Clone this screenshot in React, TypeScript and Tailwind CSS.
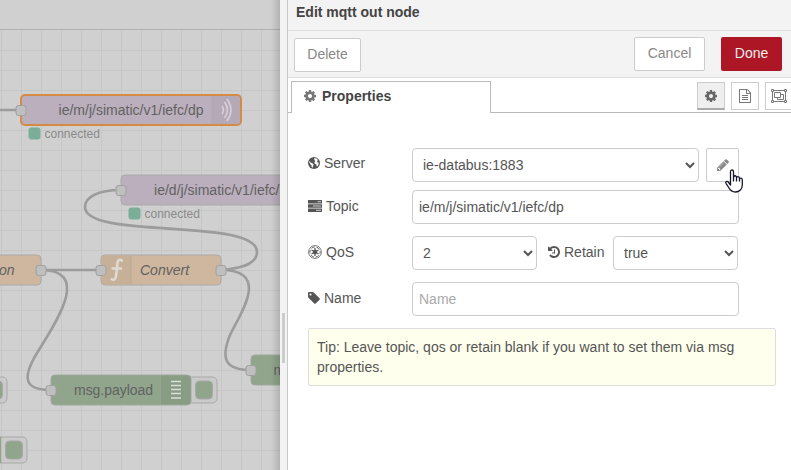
import React from "react";

const paths = {
  cog: "M1152 896q0-106-75-181t-181-75-181 75-75 181 75 181 181 75 181-75 75-181zm512-109v222q0 12-8 23t-20 13l-185 28q-19 54-39 91 35 50 107 138 10 12 10 25t-9 23q-27 37-99 108t-94 71q-12 0-26-9l-138-108q-44 23-91 38-16 136-29 186-7 28-36 28h-222q-14 0-24.5-8.5t-11.5-21.5l-28-184q-49-16-90-37l-141 107q-10 9-25 9-14 0-25-11-126-114-165-168-7-10-7-23 0-12 8-23 15-21 51-66.5t54-70.5q-27-50-41-99l-183-27q-13-2-21-12.5t-8-23.5v-222q0-12 8-23t19-13l186-28q14-46 39-92-40-57-107-138-10-12-10-24 0-10 9-23 26-36 98.5-107.5t94.5-71.5q13 0 26 10l138 107q44-23 91-38 16-136 29-186 7-28 36-28h222q14 0 24.5 8.5t11.5 21.5l28 184q49 16 90 37l142-107q9-9 24-9 13 0 25 10 129 119 165 170 7 8 7 22 0 12-8 23-15 21-51 66.5t-54 70.5q26 50 41 98l183 28q13 2 21 12.5t8 23.5z",
  pencil:
    "M491 1536l91-91-235-235-91 91v107h128v128h107zm523-928q0-22-22-22-10 0-17 7l-542 542q-7 7-7 17 0 22 22 22 10 0 17-7l542-542q7-7 7-17zm-54-192l416 416-832 832h-416v-416zm683 96q0 53-37 90l-166 166-416-416 166-165q36-38 90-38 53 0 91 38l235 234q37 39 37 91z",
  tag: "M576 448q0-53-37.5-90.5t-90.5-37.5-90.5 37.5-37.5 90.5 37.5 90.5 90.5 37.5 90.5-37.5 37.5-90.5zm1067 576q0 53-37 90l-491 492q-39 37-91 37-53 0-90-37l-715-716q-38-37-64.5-101t-26.5-117v-416q0-52 38-90t90-38h416q53 0 117 26.5t102 64.5l715 714q37 39 37 91z",
  history:
    "M1664 896q0 156-61 298t-164 245-245 164-298 61q-172 0-327-72.5t-264-204.5q-7-10-6.5-22.5t8.5-20.5l137-138q10-9 25-9 16 2 23 12 73 95 179 147t225 52q104 0 198.5-40.5t163.5-109.5 109.5-163.5 40.5-198.5-40.5-198.5-109.5-163.5-163.5-109.5-198.5-40.5q-98 0-188 35.5t-160 101.5l137 138q31 30 14 69-17 40-59 40h-448q-26 0-45-19t-19-45v-448q0-42 40-59 39-17 69 14l130 129q107-101 244.5-156.5t284.5-55.5q156 0 298 61t245 164 164 245 61 298zm-640-288v448q0 14-9 23t-23 9h-320q-14 0-23-9t-9-23v-64q0-14 9-23t23-9h224v-352q0-14 9-23t23-9h64q14 0 23 9t9 23z",
  file: "M1596 380q28 28 48 76t20 88v1152q0 40-28 68t-68 28h-1344q-40 0-68-28t-28-68v-1600q0-40 28-68t68-28h896q40 0 88 20t76 48zm-444-244v376h376q-10-29-22-41l-313-313q-12-12-41-22zm384 1528v-1024h-416q-40 0-68-28t-28-68v-416h-768v1536h1280zm-1024-864q0-14 9-23t23-9h704q14 0 23 9t9 23v64q0 14-9 23t-23 9h-704q-14 0-23-9t-9-23v-64zm736 224q14 0 23 9t9 23v64q0 14-9 23t-23 9h-704q-14 0-23-9t-9-23v-64q0-14 9-23t23-9h704zm0 256q14 0 23 9t9 23v64q0 14-9 23t-23 9h-704q-14 0-23-9t-9-23v-64q0-14 9-23t23-9h704z",
};

function Glyph({ name, className }: { name: keyof typeof paths; className: string }) {
  return (
    <svg viewBox="0 0 1792 1792" className={className} fill="currentColor">
      <path d={paths[name]} />
    </svg>
  );
}

function Globe() {
  return (
    <svg viewBox="0 0 12 12" className="size-3 shrink-0">
      <circle cx="6" cy="6" r="6" fill="#555" />
      <path
        d="M6.2 1.1 8.6 1.5 10.2 3.2 9.4 3.6 8.9 5 9.8 5.6 10.7 5.5 10.5 7.5 9.3 9.5 8.6 9.2 8.4 7.4 6.7 6.8 6.4 5.2 7.4 3.8 6.5 3.2ZM1.5 3.7 2.5 5.4 4.6 6.4 5.8 7.8 5 8.8 4.8 10.7 3.7 10 3.5 8.4 2.4 7.2 1.3 5.2Z"
        fill="#fff"
      />
    </svg>
  );
}

function Tasks() {
  return (
    <svg viewBox="0 0 14 12" className="h-3 w-3.5 shrink-0">
      <path d="M0 0h14v3.4H0zM0 4.300h14v3.400H0zM0 8.600h14V12H0z" fill="#555" />
      <path d="M9.500 1.700H13M5 6h8M8 10.300h5" stroke="#ddd" strokeWidth=".9" />
    </svg>
  );
}

function Empire() {
  return (
    <svg viewBox="0 0 14 14" className="size-3.5 shrink-0" fill="none" stroke="#555">
      <circle cx="7" cy="7" r="6.400" strokeWidth=".8" />
      <circle cx="7" cy="7" r="5.100" strokeWidth=".9" strokeDasharray="3.500 1.840" strokeDashoffset="1.750" />
      <circle cx="7" cy="7" r="2.200" fill="#555" stroke="none" />
      <path d="M7 3v8M3.540 5l6.920 4M3.540 9l6.920-4" strokeWidth="1.300" />
    </svg>
  );
}

function ObjectGroup() {
  return (
    <svg viewBox="0 0 16 14" className="h-3.5 w-4 shrink-0" fill="none" stroke="#777">
      <path d="M3 1.5h10M3 12.5h10M1.5 3v8M14.5 3v8" />
      <path d="M.5.5h2v2h-2zM13.5.5h2v2h-2zM.5 11.5h2v2h-2zM13.5 11.5h2v2h-2z" />
      <path d="M3.5 3.5h6v5h-6zM9.5 5.5h3v5h-6v-2" />
    </svg>
  );
}

function Port({ x, y }: { x: number; y: number }) {
  return <rect x={x - 4.5} y={y - 4.5} width="10" height="10" rx="2.5" fill="#bfbfbf" stroke="#a0a0a0" />;
}

function Status({ x, y }: { x: number; y: number }) {
  return (
    <g>
      <rect x={x + 0.5} y={y} width="12" height="12" rx="3" fill="#7aae98" />
      <text x={x + 16.5} y={y + 10.5} fontSize="12" fill="#898989">
        connected
      </text>
    </g>
  );
}

function DebugButton({ x, y }: { x: number; y: number }) {
  return (
    <g stroke="#a9a9a9">
      <rect x={x - 10} y={y} width="36" height="26" rx="4.5" fill="#cacaca" />
      <rect x={x + 4.5} y={y + 4} width="17" height="18" rx="4" fill="#90a58c" />
    </g>
  );
}

const columns = Array.from({ length: 14 }, (_, i) => 1.5 + i * 20);
const rows = Array.from({ length: 21 }, (_, i) => 50.5 + i * 20);

function Flow() {
  return (
    <svg width="280" height="470" viewBox="0 0 280 470" className="block" fontSize="14" fill="#626262">
      <defs>
        <linearGradient id="edge">
          <stop offset="0" stopColor="#000" stopOpacity="0" />
          <stop offset="1" stopColor="#000" stopOpacity=".14" />
        </linearGradient>
      </defs>
      <rect width="280" height="470" fill="#d0d0d0" />
      <g stroke="#c7c7c7">
        {columns.map((x) => (
          <path key={x} d={`M${x} 30V470`} />
        ))}
        {rows.map((y) => (
          <path key={y} d={`M0 ${y}H280`} />
        ))}
      </g>
      <path d="M0 29.5H280" stroke="#b2b2b2" />

      <g fill="none" stroke="#9c9c9c" strokeWidth="2.6">
        <path d="M0 110H21M41 270H101" />
        <path d="M221 270C247 268 257 262 257 252C257 217 85 240 85 207C85 197 98 190 121 190" />
        <path d="M41 270C93 270 54 325 37 353C20 381 27 390 51 390" />
        <path d="M221 270C273 270 238 317 230 335C220 360 226 370 251 370" />
      </g>

      <rect x="21" y="95" width="220" height="30" rx="4" fill="#bbafbd" stroke="#d58b45" strokeWidth="2" />
      <path d="M211 96h25q4 0 4 4v20q0 4-4 4h-25z" fill="#b5a9b7" />
      <path d="M222 106q3 4 0 8M224.5 102q6 8 0 16M227 99q8 11 0 22" fill="none" stroke="#d7d2d8" strokeWidth="1.5" />
      <text x="58.5" y="115" textLength="145">ie/m/j/simatic/v1/iefc/dp</text>
      <Port x={20.5} y={110} />
      <Status x={28} y={127.5} />

      <rect x="121" y="175" width="180" height="30" rx="4" fill="#bbafbd" stroke="#aaa" />
      <text x="154" y="195" textLength="125.5">ie/d/j/simatic/v1/iefc/</text>
      <Port x={120.5} y={190} />
      <Status x={128} y={207.5} />

      <rect x="-79" y="255" width="120" height="30" rx="4" fill="#ceb79e" stroke="#aaa" />
      <text x="-1" y="275" fontStyle="italic">on</text>
      <Port x={40.5} y={270} />

      <rect x="101" y="255" width="120" height="30" rx="4" fill="#ceb79e" stroke="#aaa" />
      <path d="M105 255.5h26v29h-26q-3.5 0-3.5-3.5v-22q0-3.5 3.5-3.5z" fill="#c6b098" />
      <path d="M131 256v28" stroke="#bda88f" />
      <path
        d="M122.500 261.500c-1.500-2.500-4.300-2.500-5 1.500l-1.500 13c-.5 4-2.800 4.800-5 2.500M111.500 268.500h10.500"
        fill="none"
        stroke="#e0dad3"
        strokeWidth="2.500"
      />
      <text x="140" y="275" fontStyle="italic">Convert</text>
      <Port x={100.5} y={270} />
      <Port x={220.5} y={270} />

      <DebugButton x={191} y={377} />
      <rect x="51" y="375" width="140" height="30" rx="4" fill="#90a58c" stroke="#a0a7a0" />
      <path d="M161 375.5h26q3.5 0 3.5 3.5v22q0 3.5-3.5 3.5h-26z" fill="#899d85" />
      <path d="M171 381.500h10M171 385.500h10M171 389.500h10M171 393.500h10M171 398h10" stroke="#dadfd9" strokeWidth="1.300" />
      <text x="74" y="395" textLength="79">msg.payload</text>
      <Port x={50.5} y={390} />

      <rect x="251" y="355" width="60" height="30" rx="4" fill="#90a58c" stroke="#a0a7a0" />
      <text x="273.500" y="375">m</text>
      <Port x={250.5} y={370} />

      <DebugButton x={-19} y={377} />
      <DebugButton x={1} y={437} />
      <path d="M.5 437v26" stroke="#90a58c" strokeWidth="1.500" />
      <rect x="271" width="9" height="470" fill="url(#edge)" />
    </svg>
  );
}

function Cursor() {
  return (
    <svg viewBox="0 0 18 24" className="absolute left-[18px] top-5 z-10 h-6 w-[18px]">
      <path
        d="M5.500 16V2.500C5.500.5 8.500.5 8.500 2.500V9C8.500 6 11.500 6.200 11.500 8.500V9.500C11.500 7 14.500 7.200 14.500 9.500V10.500C14.500 8.500 17.300 8.700 17.300 11V16C17.300 20 14.500 23 10.500 23C7 23 5 21 3.700 18.500L1 14.300C.2 12.500 2.200 11.800 3.300 13ZM8.500 8v4.500M11.500 8.500v4M14.500 9.500v3"
        fill="#fff"
        stroke="#17172b"
        strokeWidth="1.300"
        strokeLinejoin="round"
      />
    </svg>
  );
}

const field = "h-[34px] rounded border border-[#ccc] bg-white text-[14px] text-[#555]";

function Label({ children }: { children: React.ReactNode }) {
  return <label className="flex h-5 w-[104px] shrink-0 items-center">{children}</label>;
}

export default function App() {
  return (
    <div className="flex h-[470px] w-[791px] overflow-hidden bg-white font-['Liberation_Sans',Arial,sans-serif] text-[14px] leading-5 text-[#555]">
      <div className="w-[280px] shrink-0">
        <Flow />
      </div>
      <div className="flex w-2 shrink-0 items-center border-r border-[#c8c8c8] bg-[#f3f3f3] pl-0.5 pt-[206px]">
        <div className="h-[50px] w-[3px] bg-[#ccc]" />
      </div>
      <main className="flex w-[503px] shrink-0 flex-col overflow-hidden">
        <header className="h-[31px] shrink-0 border-b border-[#ddd] bg-[#f3f3f3] pl-2 pt-0.5 font-bold text-[#444]">
          Edit mqtt out node
        </header>
        <div className="flex h-[47px] shrink-0 items-start border-b border-[#ddd] bg-[#f3f3f3] pl-1.5 pr-[9px] pt-1.5 text-[#888]">
          <button className="mt-px h-[34px] w-[67px] rounded-xs border border-[#ccc] bg-white pb-0.5">Delete</button>
          <button className="ml-auto h-[34px] w-[71px] rounded-xs border border-[#ccc] bg-white pb-0.5">Cancel</button>
          <button className="ml-4 h-[34px] w-[61px] rounded-xs bg-[#ad1625] pb-0.5 text-[#eee]">Done</button>
        </div>
        <nav className="flex h-[35px] shrink-0 pt-[3px]">
          <div className="w-[3px] border-b border-[#bbb]" />
          <div className="flex w-[200px] shrink-0 items-center border border-b-0 border-[#bbb] pb-[3px] pl-[11px] font-bold text-[#444]">
            <Glyph name="cog" className="mr-[5px] size-3.5 text-[#777]" />
            Properties
          </div>
          <div className="flex w-[300px] shrink-0 gap-1.5 border-b border-[#bbb] pl-[206px] pt-px">
            <button className="flex h-7 w-7 shrink-0 items-center justify-center border border-b-2 border-[#ccc] border-b-[#aaa] bg-[#efefef] text-[#666]">
              <Glyph name="cog" className="size-3.5" />
            </button>
            <button className="flex h-7 w-7 shrink-0 items-center justify-center border border-[#ccc] text-[#777]">
              <Glyph name="file" className="size-3.5" />
            </button>
            <button className="flex h-7 w-7 shrink-0 items-center justify-center border border-[#ccc]">
              <ObjectGroup />
            </button>
          </div>
        </nav>
        <form className="flex flex-col pl-5 pt-[35px]">
          <div className="flex h-[34px]">
            <div className="pt-[5px]">
              <Label>
                <Globe />
                <span className="ml-1">Server</span>
              </Label>
            </div>
            <select className={`${field} w-[287px] px-1.5`} defaultValue="s">
              <option value="s">ie-databus:1883</option>
            </select>
            <div className="relative ml-[7px] flex h-[34px] w-[33px] items-center justify-center rounded-xs border border-[#ccc] text-[#888]">
              <Glyph name="pencil" className="size-3.5" />
              <Cursor />
            </div>
          </div>
          <div className="mt-2 flex h-[34px]">
            <div className="pt-1.5">
              <Label>
                <Tasks />
                <span className="ml-1">Topic</span>
              </Label>
            </div>
            <input className={`${field} w-[327px] px-1.5`} defaultValue="ie/m/j/simatic/v1/iefc/dp" />
          </div>
          <div className="mt-3 flex h-[34px]">
            <div className="pt-1.5">
              <Label>
                <Empire />
                <span className="ml-1">QoS</span>
              </Label>
            </div>
            <select className={`${field} w-[125px] px-1.5`} defaultValue="2">
              <option value="2">2</option>
            </select>
            <label className="ml-[11px] mt-1.5 flex h-5 w-[65px] items-center">
              <Glyph name="history" className="-ml-px size-3.5 shrink-0" />
              <span className="ml-[3px]">Retain</span>
            </label>
            <select className={`${field} w-[125px] px-1.5`} defaultValue="t">
              <option value="t">true</option>
            </select>
          </div>
          <div className="mt-3 flex h-[34px]">
            <div className="pt-1.5">
              <Label>
                <Glyph name="tag" className="-ml-px size-3.5" />
                <span className="ml-[3px]">Name</span>
              </Label>
            </div>
            <input className={`${field} w-[327px] px-1.5 placeholder:text-[#aaa]`} placeholder="Name" />
          </div>
          <div className="mt-3 h-[58px] w-[468px] rounded-xs border border-[#ddd] bg-[#ffffed] px-2 py-2">
            Tip: Leave topic, qos or retain blank if you want to set them via msg properties.
          </div>
        </form>
      </main>
    </div>
  );
}
